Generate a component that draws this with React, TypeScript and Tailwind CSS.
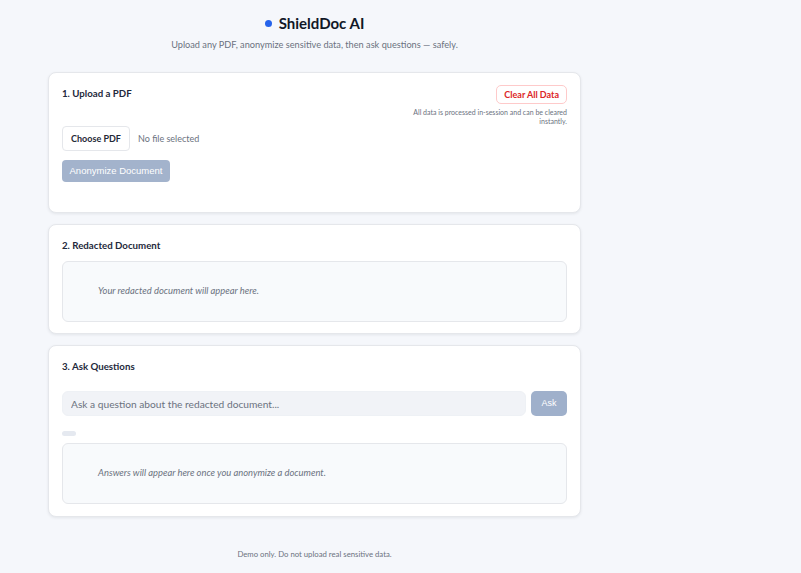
export default function App() {
  return (
    <div className="min-h-[573px] w-full bg-[#f5f7fb] font-['Lato',sans-serif] text-[#1e293b]">
      <div className="ml-[48px] w-[533px] pt-[13px]">
        {/* header */}
        <div className="flex flex-col items-center">
          <div className="flex items-center gap-[7px]">
            <span className="h-[7px] w-[7px] rounded-full bg-[#2563eb]" />
            <h1 className="text-[15px] font-bold leading-[20px] text-[#111827]">ShieldDoc AI</h1>
          </div>
          <p className="mt-[5px] text-[9.2px] leading-[14px] text-[#6b7280]">
            Upload any PDF, anonymize sensitive data, then ask questions — safely.
          </p>
        </div>

        {/* 1. upload */}
        <section className="mt-[20px] h-[141px] rounded-[8px] border border-[#e5e7eb] bg-white px-[13px] pt-[12px] shadow-[0_1px_3px_rgba(15,23,42,0.08)]">
          <div className="flex items-start justify-between">
            <h2 className="pt-[1px] text-[9.7px] font-bold leading-[14px]">1. Upload a PDF</h2>
            <div className="flex flex-col items-end">
              <button className="h-[19px] rounded-[5px] border border-[#fecaca] bg-white px-[7px] text-[9px] font-bold leading-[17px] text-[#dc2626]">
                Clear All Data
              </button>
              <p className="mt-[4px] w-[170px] text-right text-[7px] leading-[8.5px] text-[#6b7280]">
                All data is processed in-session and can be cleared instantly.
              </p>
            </div>
          </div>
          <div className="mt-[1px] flex items-center gap-[8px]">
            <button className="h-[25px] w-[68px] rounded-[4px] border border-[#e5e7eb] bg-white text-[9px] font-bold text-[#1f2937]">
              Choose PDF
            </button>
            <span className="text-[9px] text-[#6b7280]">No file selected</span>
          </div>
          <button className="mt-[9px] h-[22px] w-[108px] rounded-[4px] bg-[#a3b3cc] font-['Liberation_Sans',sans-serif] text-[9.5px] text-white">
            Anonymize Document
          </button>
        </section>

        {/* 2. redacted */}
        <section className="mt-[11px] h-[110px] rounded-[8px] border border-[#e5e7eb] bg-white px-[13px] pt-[13px] shadow-[0_1px_3px_rgba(15,23,42,0.08)]">
          <h2 className="text-[9.7px] font-bold leading-[14px]">2. Redacted Document</h2>
          <div className="mt-[9px] flex h-[61px] items-center rounded-[6px] border border-[#e5e7eb] bg-[#f8fafc] pl-[35px]">
            <p className="text-[9.4px] italic text-[#6b7280]">Your redacted document will appear here.</p>
          </div>
        </section>

        {/* 3. questions */}
        <section className="mt-[11px] h-[172px] rounded-[8px] border border-[#e5e7eb] bg-white px-[13px] pt-[13px] shadow-[0_1px_3px_rgba(15,23,42,0.08)]">
          <h2 className="text-[9.7px] font-bold leading-[14px]">3. Ask Questions</h2>
          <div className="mt-[18px] flex gap-[5px]">
            <input
              className="h-[25px] flex-1 rounded-[6px] border border-[#eef1f5] bg-[#f1f3f7] px-[8px] text-[10.2px] outline-none placeholder:text-[#6b7280]"
              placeholder="Ask a question about the redacted document..."
            />
            <button className="h-[25px] w-[36px] rounded-[5px] bg-[#9fb0cb] font-['Liberation_Sans',sans-serif] text-[9px] text-white">
              Ask
            </button>
          </div>
          <div className="mt-[15px] h-[5px] w-[14px] rounded-[3px] bg-[#e5e9f0]" />
          <div className="mt-[7px] flex h-[61px] items-center rounded-[6px] border border-[#e5e7eb] bg-[#f8fafc] pl-[35px]">
            <p className="text-[9.4px] italic text-[#6b7280]">Answers will appear here once you anonymize a document.</p>
          </div>
        </section>

        <p className="mt-[32px] text-center text-[7.75px] text-[#6b7280]">Demo only. Do not upload real sensitive data.</p>
      </div>
    </div>
  )
}
